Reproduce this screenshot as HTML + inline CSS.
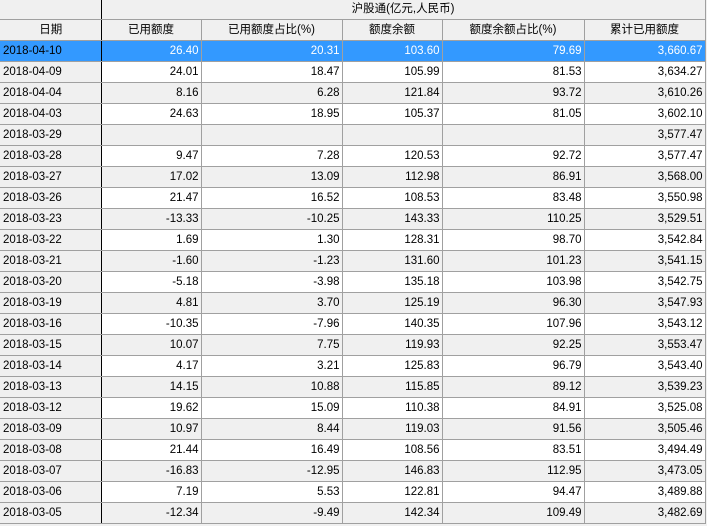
<!DOCTYPE html>
<html><head><meta charset="utf-8"><style>
html,body{margin:0;padding:0;background:#f0f0f0;width:707px;height:526px;overflow:hidden}
table{border-collapse:collapse;table-layout:fixed;width:705px;font-family:"Liberation Sans","Noto Sans CJK SC",sans-serif;font-size:11.5px;color:#000}
td{border:1px solid #a0a0a0;height:20px;padding:0 2px;white-space:nowrap;overflow:hidden;text-align:right;background:#fff;box-sizing:content-box;line-height:20px}
tr:nth-child(odd) td{background:#f0f0f0}
td.d{text-align:left;background:#f0f0f0 !important;border-right:1px solid #000;padding-left:3px}
tr.h td{background:#f0f0f0;text-align:center}
tr.h1 td{height:19px;line-height:19px}
tr.sel td{background:#3399ff !important;color:#fff}
tr.sel td.d{color:#000}
table tr:first-child td{border-top:none}
td:first-child{border-left:none}
</style></head><body>
<table>
<colgroup><col style="width:101px"><col style="width:100px"><col style="width:141px"><col style="width:100px"><col style="width:142px"><col style="width:121px"></colgroup>
<tr class="h h1"><td class="d"></td><td colspan="5" style="background:#f0f0f0">沪股通(亿元,人民币)</td></tr>
<tr class="h"><td class="d" style="text-align:center">日期</td><td>已用额度</td><td>已用额度占比(%)</td><td>额度余额</td><td>额度余额占比(%)</td><td>累计已用额度</td></tr>
<tr class="sel"><td class="d">2018-04-10</td><td>26.40</td><td>20.31</td><td>103.60</td><td>79.69</td><td>3,660.67</td></tr>
<tr><td class="d">2018-04-09</td><td>24.01</td><td>18.47</td><td>105.99</td><td>81.53</td><td>3,634.27</td></tr>
<tr><td class="d">2018-04-04</td><td>8.16</td><td>6.28</td><td>121.84</td><td>93.72</td><td>3,610.26</td></tr>
<tr><td class="d">2018-04-03</td><td>24.63</td><td>18.95</td><td>105.37</td><td>81.05</td><td>3,602.10</td></tr>
<tr><td class="d">2018-03-29</td><td></td><td></td><td></td><td></td><td>3,577.47</td></tr>
<tr><td class="d">2018-03-28</td><td>9.47</td><td>7.28</td><td>120.53</td><td>92.72</td><td>3,577.47</td></tr>
<tr><td class="d">2018-03-27</td><td>17.02</td><td>13.09</td><td>112.98</td><td>86.91</td><td>3,568.00</td></tr>
<tr><td class="d">2018-03-26</td><td>21.47</td><td>16.52</td><td>108.53</td><td>83.48</td><td>3,550.98</td></tr>
<tr><td class="d">2018-03-23</td><td>-13.33</td><td>-10.25</td><td>143.33</td><td>110.25</td><td>3,529.51</td></tr>
<tr><td class="d">2018-03-22</td><td>1.69</td><td>1.30</td><td>128.31</td><td>98.70</td><td>3,542.84</td></tr>
<tr><td class="d">2018-03-21</td><td>-1.60</td><td>-1.23</td><td>131.60</td><td>101.23</td><td>3,541.15</td></tr>
<tr><td class="d">2018-03-20</td><td>-5.18</td><td>-3.98</td><td>135.18</td><td>103.98</td><td>3,542.75</td></tr>
<tr><td class="d">2018-03-19</td><td>4.81</td><td>3.70</td><td>125.19</td><td>96.30</td><td>3,547.93</td></tr>
<tr><td class="d">2018-03-16</td><td>-10.35</td><td>-7.96</td><td>140.35</td><td>107.96</td><td>3,543.12</td></tr>
<tr><td class="d">2018-03-15</td><td>10.07</td><td>7.75</td><td>119.93</td><td>92.25</td><td>3,553.47</td></tr>
<tr><td class="d">2018-03-14</td><td>4.17</td><td>3.21</td><td>125.83</td><td>96.79</td><td>3,543.40</td></tr>
<tr><td class="d">2018-03-13</td><td>14.15</td><td>10.88</td><td>115.85</td><td>89.12</td><td>3,539.23</td></tr>
<tr><td class="d">2018-03-12</td><td>19.62</td><td>15.09</td><td>110.38</td><td>84.91</td><td>3,525.08</td></tr>
<tr><td class="d">2018-03-09</td><td>10.97</td><td>8.44</td><td>119.03</td><td>91.56</td><td>3,505.46</td></tr>
<tr><td class="d">2018-03-08</td><td>21.44</td><td>16.49</td><td>108.56</td><td>83.51</td><td>3,494.49</td></tr>
<tr><td class="d">2018-03-07</td><td>-16.83</td><td>-12.95</td><td>146.83</td><td>112.95</td><td>3,473.05</td></tr>
<tr><td class="d">2018-03-06</td><td>7.19</td><td>5.53</td><td>122.81</td><td>94.47</td><td>3,489.88</td></tr>
<tr><td class="d">2018-03-05</td><td>-12.34</td><td>-9.49</td><td>142.34</td><td>109.49</td><td>3,482.69</td></tr>
</table>
</body></html>
